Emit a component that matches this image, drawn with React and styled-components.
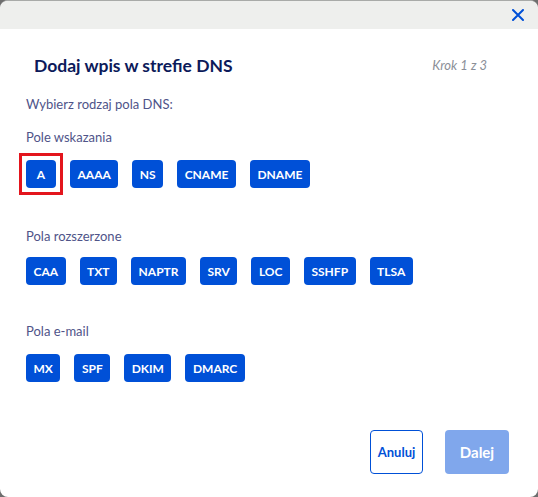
import styled, { createGlobalStyle } from 'styled-components';

const GlobalStyle = createGlobalStyle`
  body {
    margin: 0;
    background: #6e6e6e;
    font-family: Lato, "Open Sans", sans-serif;
  }
`;

const colors = {
  blue: '#0050d7',
  blueDisabled: '#80a7ec',
  navy: '#0c1a5a',
  label: '#4f5489',
  muted: '#8b8f98',
};

const Modal = styled.div`
  width: 538px;
  height: 497px;
  background: #fff;
  border-radius: 8px;
  border-top: 1px solid #a8aaa8;
  box-sizing: border-box;
  overflow: hidden;
  display: flex;
  flex-direction: column;
`;

const TopBar = styled.div`
  height: 28px;
  background: #eeefed;
  display: flex;
  justify-content: flex-end;
  align-items: center;
  padding-right: 12px;
`;

const CloseButton = styled.button`
  border: 0;
  background: none;
  padding: 0;
  width: 16px;
  height: 16px;
  display: flex;
  align-items: center;
  justify-content: center;
  cursor: pointer;
`;

const Body = styled.div`
  flex: 1;
  padding: 24px 26px 0 26px;
  display: flex;
  flex-direction: column;
`;

const TitleRow = styled.div`
  display: flex;
  justify-content: space-between;
  align-items: center;
  padding: 0 25px 0 8px;
  height: 24px;
`;

const Title = styled.h2`
  margin: 0;
  font-size: 17.5px;
  font-weight: 700;
  color: ${colors.navy};
`;

const Step = styled.span`
  font-size: 13px;
  font-style: italic;
  color: ${colors.muted};
`;

const Label = styled.p`
  margin: ${(p) => p.top}px 0 0 0;
  font-size: 13px;
  line-height: 18px;
  color: ${colors.label};
`;

const ButtonRow = styled.div`
  display: flex;
  gap: 14px;
  margin-top: ${(p) => p.top}px;
`;

const TypeButton = styled.button`
  position: relative;
  height: 28px;
  min-width: 30px;
  padding: 0 7.5px;
  border: 0;
  border-radius: 4px;
  background: ${colors.blue};
  color: #fff;
  font-family: Lato, "Open Sans", sans-serif;
  font-size: 12px;
  font-weight: 700;
  cursor: pointer;

  &::after {
    content: '';
    display: ${(p) => (p.selected ? 'block' : 'none')};
    position: absolute;
    inset: -7px;
    border: 3px solid #e3151d;
  }
`;

const Footer = styled.div`
  display: flex;
  justify-content: flex-end;
  gap: 22px;
  padding: 0 29px 23px 0;
`;

const FooterButton = styled.button`
  height: 44px;
  padding: 0 ${(p) => (p.primary ? 14 : 6)}px;
  border-radius: 4px;
  font-family: Lato, "Open Sans", sans-serif;
  font-size: ${(p) => (p.primary ? 15 : 13)}px;
  font-weight: 700;
  border: ${(p) => (p.primary ? '0' : `1.5px solid ${colors.blue}`)};
  background: ${(p) => (p.primary ? colors.blueDisabled : '#fff')};
  color: ${(p) => (p.primary ? '#fff' : colors.blue)};
  min-width: ${(p) => (p.primary ? 64 : 53)}px;
`;

const groups = [
  { label: 'Pole wskazania', top: 15, rowTop: 14, types: ['A', 'AAAA', 'NS', 'CNAME', 'DNAME'] },
  { label: 'Pola rozszerzone', top: 39, rowTop: 12, types: ['CAA', 'TXT', 'NAPTR', 'SRV', 'LOC', 'SSHFP', 'TLSA'] },
  { label: 'Pola e-mail', top: 37, rowTop: 14, types: ['MX', 'SPF', 'DKIM', 'DMARC'] },
];

export default function App() {
  return (
    <>
      <GlobalStyle />
      <Modal>
        <TopBar>
          <CloseButton aria-label="Zamknij">
            <svg width="12" height="12" viewBox="0 0 12 12">
              <path d="M1 1 L11 11 M11 1 L1 11" stroke={colors.blue} strokeWidth="2" strokeLinecap="round" />
            </svg>
          </CloseButton>
        </TopBar>
        <Body>
          <TitleRow>
            <Title>Dodaj wpis w strefie DNS</Title>
            <Step>Krok 1 z 3</Step>
          </TitleRow>
          <Label top={18}>Wybierz rodzaj pola DNS:</Label>
          {groups.map((g) => (
            <div key={g.label}>
              <Label top={g.top}>{g.label}</Label>
              <ButtonRow top={g.rowTop}>
                {g.types.map((t) => (
                  <TypeButton key={t} selected={t === 'A'}>{t}</TypeButton>
                ))}
              </ButtonRow>
            </div>
          ))}
        </Body>
        <Footer>
          <FooterButton>Anuluj</FooterButton>
          <FooterButton primary disabled>Dalej</FooterButton>
        </Footer>
      </Modal>
    </>
  );
}
